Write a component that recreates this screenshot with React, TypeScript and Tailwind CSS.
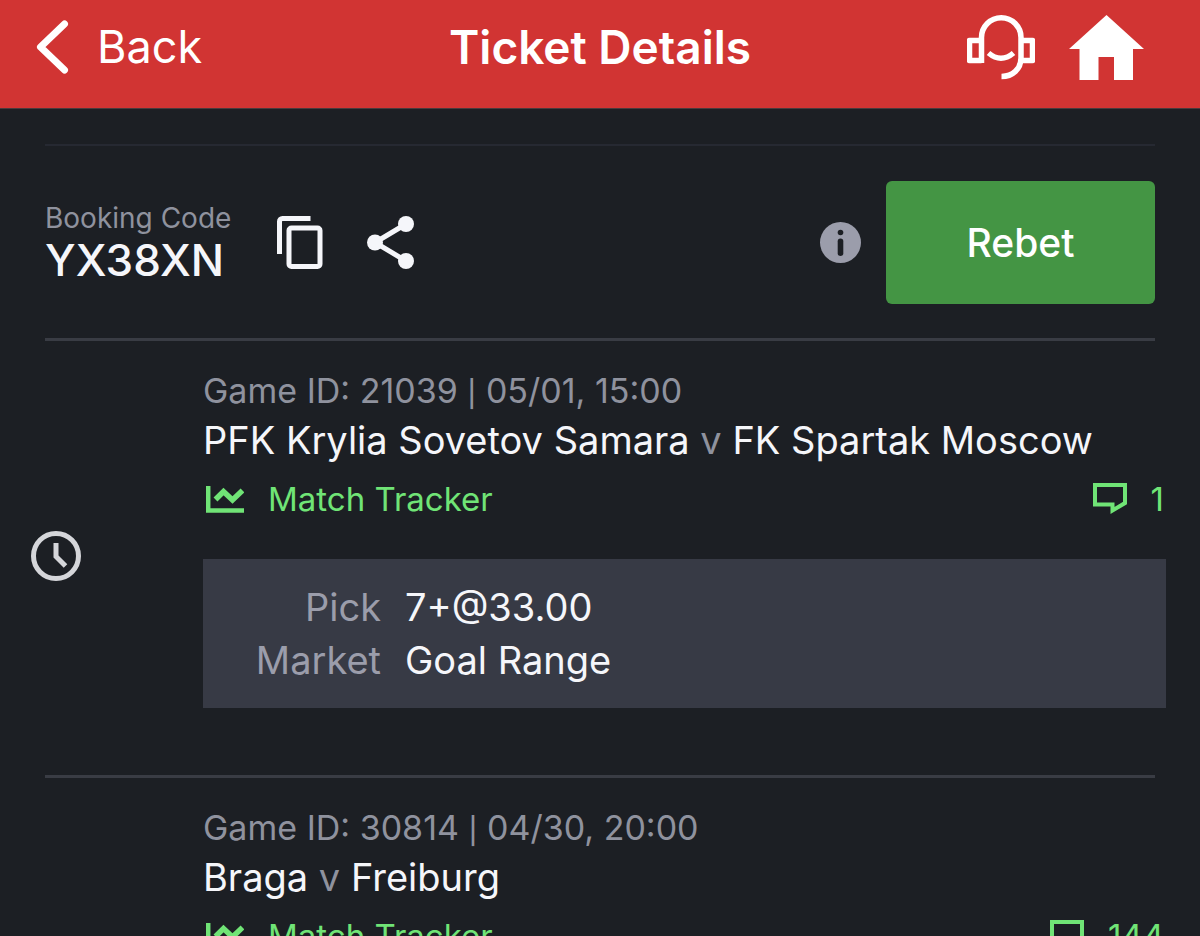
type Game = {
  id: string;
  kickoff: string;
  home: string;
  away: string;
  comments: number;
  pick: string;
  market: string;
};

const GAMES: Game[] = [
  {
    id: "21039",
    kickoff: "05/01, 15:00",
    home: "PFK Krylia Sovetov Samara",
    away: "FK Spartak Moscow",
    comments: 1,
    pick: "7+@33.00",
    market: "Goal Range",
  },
  {
    id: "30814",
    kickoff: "04/30, 20:00",
    home: "Braga",
    away: "Freiburg",
    comments: 144,
    pick: "7+@33.00",
    market: "Goal Range",
  },
];

export default function App() {
  return (
    <div className="flex h-screen flex-col overflow-hidden bg-[#1c1f24] font-['Inter','Liberation_Sans',sans-serif] text-[#f5f6fa]">
      <Header />
      <main className="min-h-0 flex-1 overflow-y-auto [scrollbar-width:none]">
        <BookingBar />
        {GAMES.map((game) => (
          <GameRow key={game.id} game={game} />
        ))}
      </main>
    </div>
  );
}

function Header() {
  return (
    <header className="grid shrink-0 grid-cols-[1fr_auto_1fr] items-center border-b border-[#4a3a3c] bg-[#d13433] px-9 pt-3.5 pb-7 text-white">
      <button type="button" className="flex items-center gap-7 justify-self-start text-[45px] leading-[66px]">
        <BackIcon />
        Back
      </button>
      <h1 className="text-[46px] leading-[66px] font-semibold">Ticket Details</h1>
      <div className="mr-5 flex items-center gap-[34px] justify-self-end">
        <button type="button" aria-label="Support">
          <SupportIcon />
        </button>
        <a href="#home" aria-label="Home">
          <HomeIcon />
        </a>
      </div>
    </header>
  );
}

function BookingBar() {
  return (
    <section className="mx-[45px] mt-[35px] flex items-center border-t-2 border-[#262932] pt-[35px] pb-[34px]">
      <div className="pb-0.5">
        <p className="text-[28px] leading-9 text-[#8f929e]">Booking Code</p>
        <p className="text-[44px] leading-[48px] font-medium">YX38XN</p>
      </div>
      <button type="button" aria-label="Copy booking code" className="ml-[46px]">
        <CopyIcon />
      </button>
      <button type="button" aria-label="Share" className="ml-11">
        <ShareIcon />
      </button>
      <button type="button" aria-label="Booking code info" className="mr-[25px] ml-auto">
        <InfoIcon />
      </button>
      <button
        type="button"
        className="w-[269px] rounded-md bg-[#449544] py-9 text-[39px] leading-[51px] font-medium text-white"
      >
        Rebet
      </button>
    </section>
  );
}

function GameRow({ game }: { game: Game }) {
  return (
    <article>
      <hr className="mx-[45px] border-t-3 border-[#393c44]" />
      <div className="flex items-center gap-[122px] pr-[34px] pl-[31px]">
        <ClockIcon />
        <div className="min-w-0 flex-1 pt-7 pb-[67px]">
          <p className="text-[34px] leading-[44px] text-[#8f929e]">
            Game ID: {game.id} <span className="text-[26px] leading-none font-medium">|</span> {game.kickoff}
          </p>
          <h2 className="text-[38px] leading-[54px]">
            {game.home} <span className="text-[#8f929e]">v</span> {game.away}
          </h2>
          <div className="mt-2.5 flex items-center justify-between text-[33px] leading-[44px] text-[#70e476]">
            <a href={`#tracker-${game.id}`} className="flex items-center gap-6 pl-[3px]">
              <TrackerIcon />
              Match Tracker
            </a>
            <a
              href={`#comments-${game.id}`}
              aria-label={`${game.comments} comments`}
              className="flex items-center gap-6 pr-0.5"
            >
              <CommentIcon />
              {game.comments}
            </a>
          </div>
          <dl className="mt-[38px] grid grid-cols-[178px_1fr] gap-x-6 bg-[#373a45] pt-[22px] pb-[21px] text-[38px] leading-[53px]">
            <dt className="text-right text-[#9b9dab]">Pick</dt>
            <dd>{game.pick}</dd>
            <dt className="text-right text-[#9b9dab]">Market</dt>
            <dd>{game.market}</dd>
          </dl>
        </div>
      </div>
    </article>
  );
}

function BackIcon() {
  return (
    <svg width="33" height="54" viewBox="0 0 33 54" fill="none" stroke="currentColor" strokeWidth="7" strokeLinecap="round" strokeLinejoin="round">
      <path d="M28.5 4 4.5 27l24 23" />
    </svg>
  );
}

function SupportIcon() {
  return (
    <svg width="68" height="65" viewBox="0 0 68 65" fill="none" stroke="currentColor" strokeWidth="5.5" strokeLinejoin="round">
      <path d="M14.5 48V22.5a19.75 19.75 0 0 1 39.5 0V43c0 11-8.5 18.5-19.5 18.5" />
      <path d="M14.5 45.5h-12v-20h12M54 25.5h11.5v20H54" />
      <path d="M21.5 38q12.5 10.5 25 0" />
    </svg>
  );
}

function HomeIcon() {
  return (
    <svg width="75" height="65" viewBox="0 0 75 65" fill="currentColor">
      <path d="M37.5 0 75 34H64v31H45V42H29.5v23h-19V34H0z" />
    </svg>
  );
}

function CopyIcon() {
  return (
    <svg width="46" height="53" viewBox="0 0 46 53" fill="none" stroke="currentColor" strokeWidth="5">
      <path d="M2.5 38V5.5a3 3 0 0 1 3-3h28" />
      <rect x="12" y="12" width="31" height="38.5" rx="2.5" />
    </svg>
  );
}

function ShareIcon() {
  return (
    <svg width="47" height="53" viewBox="0 0 47 53" fill="currentColor">
      <path d="M39 8 8 26.5 39 45" fill="none" stroke="currentColor" strokeWidth="5" />
      <circle cx="39" cy="8" r="8" />
      <circle cx="8" cy="26.5" r="8" />
      <circle cx="39" cy="45" r="8" />
    </svg>
  );
}

function InfoIcon() {
  return (
    <svg width="41" height="41" viewBox="0 0 41 41">
      <circle cx="20.5" cy="20.5" r="20.5" fill="#9b9dab" />
      <circle cx="20.5" cy="10.5" r="2.8" fill="#1c1f24" />
      <rect x="17.7" y="16.5" width="5.6" height="17.5" rx="2.8" fill="#1c1f24" />
    </svg>
  );
}

function ClockIcon() {
  return (
    <svg width="50" height="50" viewBox="0 0 50 50" fill="none" stroke="#d5d6da" strokeWidth="5" className="mb-1 shrink-0">
      <circle cx="25" cy="25" r="22.5" />
      <path d="M25 12v13.5l9.5 9.5" />
    </svg>
  );
}

function TrackerIcon() {
  return (
    <svg width="38" height="27" viewBox="0 0 38 27" fill="none" stroke="currentColor" strokeWidth="4.5">
      <path d="M2.2 0v24.5H38" />
      <path d="m9.5 13.5 8-8 9 8.5 10-9.5" strokeWidth="5.5" />
    </svg>
  );
}

function CommentIcon() {
  return (
    <svg width="34" height="32" viewBox="0 0 34 32" fill="none" stroke="currentColor" strokeWidth="4">
      <path d="M2 2h30v18l-12.5 7.5V21.5H2z" />
    </svg>
  );
}
